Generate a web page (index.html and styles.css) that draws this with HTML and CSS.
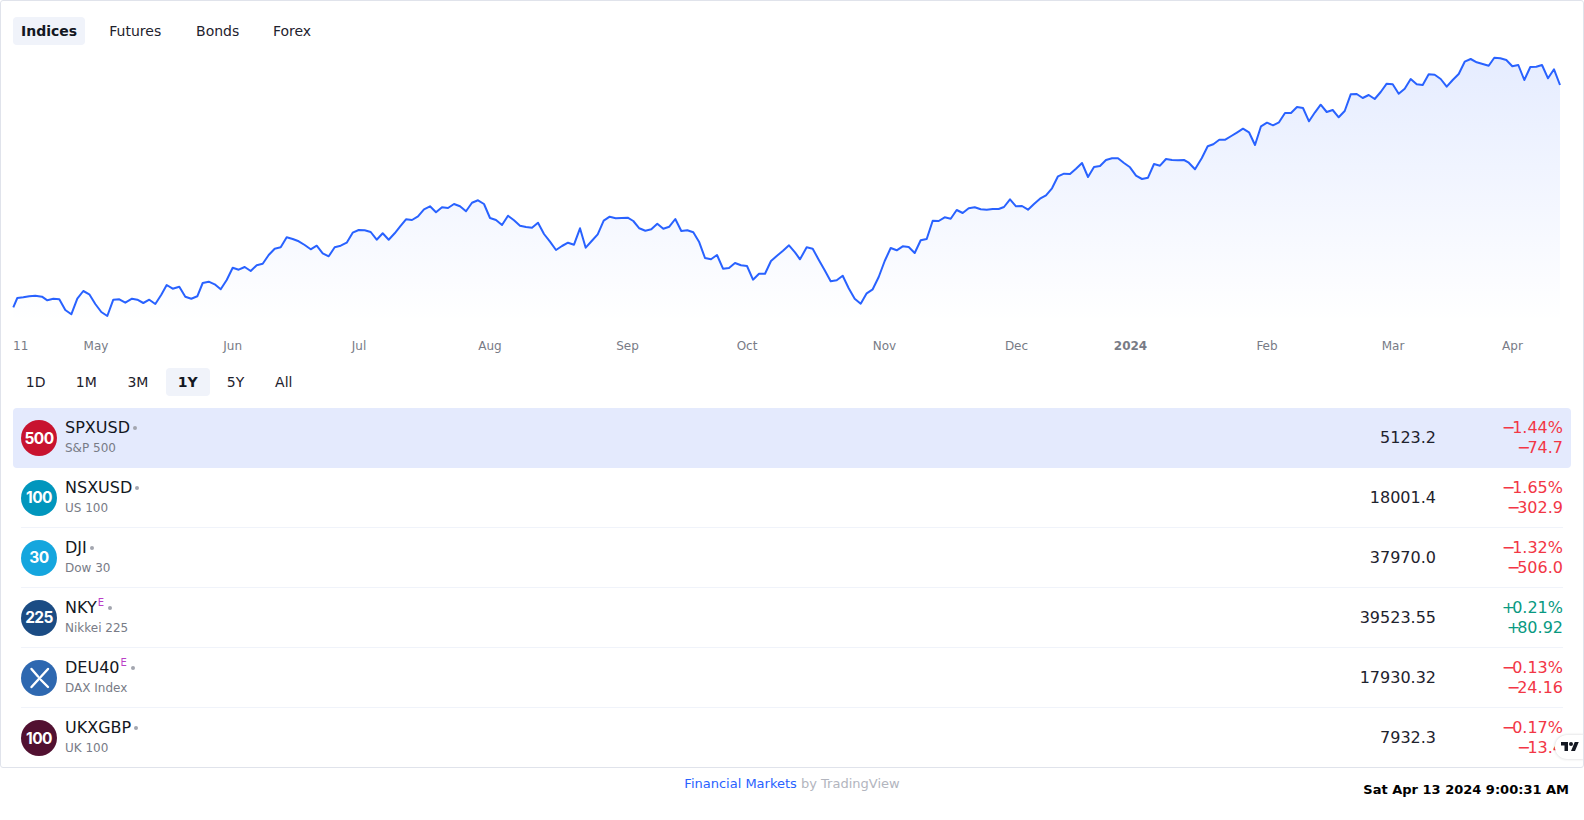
FILE: index.html
```html
<!DOCTYPE html>
<html lang="en">
<head>
<meta charset="utf-8">
<title>Financial Markets</title>
<link rel="stylesheet" href="styles.css">
</head>
<body>
<main class="widget">
  <nav class="tabs">
    <button class="tab active" data-label="Indices">Indices</button>
    <button class="tab" data-label="Futures">Futures</button>
    <button class="tab" data-label="Bonds">Bonds</button>
    <button class="tab" data-label="Forex">Forex</button>
  </nav>
  <svg class="chart" viewBox="1 45 1582 323" width="1582" height="323">
    <defs>
      <linearGradient id="area" gradientUnits="userSpaceOnUse" x1="0" y1="57" x2="0" y2="322">
        <stop offset="0" stop-color="#2962ff" stop-opacity="0.12"/>
        <stop offset="1" stop-color="#2962ff" stop-opacity="0"/>
      </linearGradient>
    </defs>
    <path class="area" d="M13.3 322V307.3L17.3 298 23.3 297.3 29.3 296.3 35.3 295.7 42 296.7 47.3 300.3 53.3 298.7 59.3 299.3 65.3 310 71.3 314.3 77.3 298.7 83.3 291 89.3 294.3 95.3 304 101.3 312 107.3 316 113.3 299.7 119.3 299.3 125.3 302.7 132 298.7 137.3 299.7 143.3 303 149.3 299.7 155.3 304 161.3 294.7 166.7 285 172.7 288.7 179.3 286.7 185.3 296.7 191.3 298.7 197.3 296.3 202.7 283 208.7 281.7 214.7 284.3 220.7 289.3 226.7 280 232.7 267.7 238.7 269.7 244.7 267 250.7 271 256.7 265.3 262.7 263.7 268.7 255 274.7 248.7 280.7 247.3 286.7 237.3 292.7 239 298.7 241.3 304.7 245 310.7 249.3 316.7 245.7 322.7 253.3 328.7 256.3 334.7 247.3 340.7 245.7 346.7 242.7 352.7 232.7 358.7 230 364.7 230.3 370.7 232 376.7 239.7 382.7 233.3 388.7 239.7 394.7 233.3 400 226.7 406 219.3 412 220 418 216.3 424 209.3 430 206.3 436 212.3 442 207.3 448 208 454 204 460 206.3 466 211.3 472 202.7 478 200.3 484 204 490 218 496 220 502 225 508 215.7 514 220.3 520 225.7 526 227 532 227.7 538 222.7 544 234 550 241.7 556 250 562 246 568 242.7 574 244.7 580 228.3 585.7 247.7 591.7 241 597.7 234.3 603.7 220.7 609.7 216.7 615.7 218.3 621.7 218 627.7 217.7 633.3 221 639.3 228.3 645.3 230.7 651.3 229.3 657.3 223.7 663.3 228.7 669.3 226.7 675.3 219 681.3 231 687.3 230.3 693.3 232.3 699 241.7 705 258 711 259.3 717 255 723 268.7 729 268 735 263 741 265.3 747 266 753 279.7 759 273.7 765 273.7 771 261 777 255.7 783 250.7 789 245.3 795 252.3 800 259.3 806.7 247.3 812.7 248.7 818.7 259.7 824.7 270.3 830.7 281.3 836.7 280.3 842.7 275.7 848.7 288.3 854.7 298.7 860.7 303.7 866.7 293.3 872.7 289.3 878.7 277 884.7 261 890.7 248 896.7 250.3 902.7 246.3 908.7 247 914.7 253 920.7 240.3 926.7 239 932.7 220.7 938.7 221 944.7 217.3 950.7 218.7 956.7 210 962.7 213 968.7 208.3 974.7 207.3 980.7 209.3 986.7 209.7 992.7 209 998.7 209 1004 207 1010 199.3 1016 206.3 1022 206 1028 209.7 1034 204 1040 198.7 1046 195.3 1052 188.3 1058 176.3 1064 173.7 1070 174 1076 168.7 1082 163 1088 177 1094 167 1100 166 1106 160 1112 158.3 1118 158.3 1124 163 1130 167.3 1136 175.7 1142 179 1148 177.7 1154 164 1160 165.7 1166 159 1172 160 1178 160.3 1184 160 1188.3 162.3 1195 169.3 1201.7 158.3 1207.7 146.3 1213.3 144.3 1219.3 139.7 1225.3 139.7 1231.3 136 1237.3 132.3 1243 128.7 1249 132.3 1255 145 1261 126.3 1267 122.7 1273 125.3 1279 122.3 1285 113 1291 113 1297 107 1303 108 1309 121.3 1315 112.3 1320.7 104.7 1326.7 112 1332.7 110 1338.7 117.3 1344.7 111 1350.7 94.3 1356.7 94 1362.7 98 1368.7 95 1374.7 99 1380.7 92 1386.7 83.7 1392.7 84.3 1398.7 93.7 1404.7 88.7 1410.7 79 1416.7 84.3 1422.7 85 1428.7 74.3 1434.7 74.7 1440.7 79 1446.7 86.7 1452.7 80 1458.7 74 1464.7 61.7 1470.7 59 1476.7 62.3 1482.7 64 1488.7 65.7 1494.3 57.7 1500.3 58.3 1506.3 60 1512.3 66.3 1518.3 65 1524.3 80 1530.3 67 1536.3 66.7 1542 65 1548 78.3 1554 69.3 1560 85V322Z"/>
    <path class="line" d="M13.3 307.3L17.3 298 23.3 297.3 29.3 296.3 35.3 295.7 42 296.7 47.3 300.3 53.3 298.7 59.3 299.3 65.3 310 71.3 314.3 77.3 298.7 83.3 291 89.3 294.3 95.3 304 101.3 312 107.3 316 113.3 299.7 119.3 299.3 125.3 302.7 132 298.7 137.3 299.7 143.3 303 149.3 299.7 155.3 304 161.3 294.7 166.7 285 172.7 288.7 179.3 286.7 185.3 296.7 191.3 298.7 197.3 296.3 202.7 283 208.7 281.7 214.7 284.3 220.7 289.3 226.7 280 232.7 267.7 238.7 269.7 244.7 267 250.7 271 256.7 265.3 262.7 263.7 268.7 255 274.7 248.7 280.7 247.3 286.7 237.3 292.7 239 298.7 241.3 304.7 245 310.7 249.3 316.7 245.7 322.7 253.3 328.7 256.3 334.7 247.3 340.7 245.7 346.7 242.7 352.7 232.7 358.7 230 364.7 230.3 370.7 232 376.7 239.7 382.7 233.3 388.7 239.7 394.7 233.3 400 226.7 406 219.3 412 220 418 216.3 424 209.3 430 206.3 436 212.3 442 207.3 448 208 454 204 460 206.3 466 211.3 472 202.7 478 200.3 484 204 490 218 496 220 502 225 508 215.7 514 220.3 520 225.7 526 227 532 227.7 538 222.7 544 234 550 241.7 556 250 562 246 568 242.7 574 244.7 580 228.3 585.7 247.7 591.7 241 597.7 234.3 603.7 220.7 609.7 216.7 615.7 218.3 621.7 218 627.7 217.7 633.3 221 639.3 228.3 645.3 230.7 651.3 229.3 657.3 223.7 663.3 228.7 669.3 226.7 675.3 219 681.3 231 687.3 230.3 693.3 232.3 699 241.7 705 258 711 259.3 717 255 723 268.7 729 268 735 263 741 265.3 747 266 753 279.7 759 273.7 765 273.7 771 261 777 255.7 783 250.7 789 245.3 795 252.3 800 259.3 806.7 247.3 812.7 248.7 818.7 259.7 824.7 270.3 830.7 281.3 836.7 280.3 842.7 275.7 848.7 288.3 854.7 298.7 860.7 303.7 866.7 293.3 872.7 289.3 878.7 277 884.7 261 890.7 248 896.7 250.3 902.7 246.3 908.7 247 914.7 253 920.7 240.3 926.7 239 932.7 220.7 938.7 221 944.7 217.3 950.7 218.7 956.7 210 962.7 213 968.7 208.3 974.7 207.3 980.7 209.3 986.7 209.7 992.7 209 998.7 209 1004 207 1010 199.3 1016 206.3 1022 206 1028 209.7 1034 204 1040 198.7 1046 195.3 1052 188.3 1058 176.3 1064 173.7 1070 174 1076 168.7 1082 163 1088 177 1094 167 1100 166 1106 160 1112 158.3 1118 158.3 1124 163 1130 167.3 1136 175.7 1142 179 1148 177.7 1154 164 1160 165.7 1166 159 1172 160 1178 160.3 1184 160 1188.3 162.3 1195 169.3 1201.7 158.3 1207.7 146.3 1213.3 144.3 1219.3 139.7 1225.3 139.7 1231.3 136 1237.3 132.3 1243 128.7 1249 132.3 1255 145 1261 126.3 1267 122.7 1273 125.3 1279 122.3 1285 113 1291 113 1297 107 1303 108 1309 121.3 1315 112.3 1320.7 104.7 1326.7 112 1332.7 110 1338.7 117.3 1344.7 111 1350.7 94.3 1356.7 94 1362.7 98 1368.7 95 1374.7 99 1380.7 92 1386.7 83.7 1392.7 84.3 1398.7 93.7 1404.7 88.7 1410.7 79 1416.7 84.3 1422.7 85 1428.7 74.3 1434.7 74.7 1440.7 79 1446.7 86.7 1452.7 80 1458.7 74 1464.7 61.7 1470.7 59 1476.7 62.3 1482.7 64 1488.7 65.7 1494.3 57.7 1500.3 58.3 1506.3 60 1512.3 66.3 1518.3 65 1524.3 80 1530.3 67 1536.3 66.7 1542 65 1548 78.3 1554 69.3 1560 85"/>
    <g class="axis">
      <text x="13" y="350" class="first">11</text>
      <text x="96" y="350">May</text>
      <text x="232.7" y="350">Jun</text>
      <text x="359" y="350">Jul</text>
      <text x="490" y="350">Aug</text>
      <text x="627.5" y="350">Sep</text>
      <text x="747" y="350">Oct</text>
      <text x="884.5" y="350">Nov</text>
      <text x="1016.5" y="350">Dec</text>
      <text x="1130.5" y="350" class="year">2024</text>
      <text x="1267" y="350">Feb</text>
      <text x="1393" y="350">Mar</text>
      <text x="1512.5" y="350">Apr</text>
    </g>
  </svg>
  <nav class="ranges">
    <button class="tab" data-label="1D">1D</button>
    <button class="tab" data-label="1M">1M</button>
    <button class="tab" data-label="3M">3M</button>
    <button class="tab active" data-label="1Y">1Y</button>
    <button class="tab" data-label="5Y">5Y</button>
    <button class="tab" data-label="All">All</button>
  </nav>
  <section class="list">
    <div class="row active">
      <div class="row-inner">
        <span class="logo logo-spx">500</span>
        <div class="sym"><div class="name">SPXUSD<i class="dot"></i></div><div class="desc">S&amp;P 500</div></div>
        <div class="price">5123.2</div>
        <div class="change down"><div><span class="sign">−</span>1.44%</div><div><span class="sign">−</span>74.7</div></div>
      </div>
    </div>
    <div class="row">
      <div class="row-inner">
        <span class="logo logo-nsx">100</span>
        <div class="sym"><div class="name">NSXUSD<i class="dot"></i></div><div class="desc">US 100</div></div>
        <div class="price">18001.4</div>
        <div class="change down"><div><span class="sign">−</span>1.65%</div><div><span class="sign">−</span>302.9</div></div>
      </div>
    </div>
    <div class="row">
      <div class="row-inner">
        <span class="logo logo-dji">30</span>
        <div class="sym"><div class="name">DJI<i class="dot"></i></div><div class="desc">Dow 30</div></div>
        <div class="price">37970.0</div>
        <div class="change down"><div><span class="sign">−</span>1.32%</div><div><span class="sign">−</span>506.0</div></div>
      </div>
    </div>
    <div class="row">
      <div class="row-inner">
        <span class="logo logo-nky">225</span>
        <div class="sym"><div class="name">NKY<sup class="flag">E</sup><i class="dot"></i></div><div class="desc">Nikkei 225</div></div>
        <div class="price">39523.55</div>
        <div class="change up"><div><span class="sign">+</span>0.21%</div><div><span class="sign">+</span>80.92</div></div>
      </div>
    </div>
    <div class="row">
      <div class="row-inner">
        <span class="logo logo-dax"><svg viewBox="0 0 36 36" width="36" height="36"><path d="M27 9 10.5 27M10.5 9l6.5 7.5M20 20l7 7" fill="none" stroke="#fff" stroke-width="2.4" stroke-linecap="round"/></svg></span>
        <div class="sym"><div class="name">DEU40<sup class="flag">E</sup><i class="dot"></i></div><div class="desc">DAX Index</div></div>
        <div class="price">17930.32</div>
        <div class="change down"><div><span class="sign">−</span>0.13%</div><div><span class="sign">−</span>24.16</div></div>
      </div>
    </div>
    <div class="row">
      <div class="row-inner">
        <span class="logo logo-ukx">100</span>
        <div class="sym"><div class="name">UKXGBP<i class="dot"></i></div><div class="desc">UK 100</div></div>
        <div class="price">7932.3</div>
        <div class="change down"><div><span class="sign">−</span>0.17%</div><div><span class="sign">−</span>13.4</div></div>
      </div>
    </div>
  </section>
  <a class="badge" aria-label="TradingView">
    <svg viewBox="0 0 36 28" width="18" height="14"><path d="M14 22H7V11H0V4h14v18ZM28 22h-8l7.5-18h8L28 22Z" fill="#131722"/><circle cx="20" cy="8" r="4" fill="#131722"/></svg>
  </a>
</main>
<footer class="footer">
  <div class="copy"><span class="link">Financial Markets</span> by TradingView</div>
  <div class="stamp">Sat Apr 13 2024 9:00:31 AM</div>
</footer>
</body>
</html>
```
FILE: styles.css
```css
* { box-sizing: border-box; }
html, body { margin: 0; padding: 0; background: #fff; }
body {
  width: 1584px;
  height: 820px;
  overflow: hidden;
  font-family: "DejaVu Sans", sans-serif;
  color: #1e222d;
}
.widget {
  position: relative;
  display: flex;
  flex-direction: column;
  height: 768px;
  border: 1px solid #e0e3eb;
  border-radius: 3px;
  overflow: hidden;
}
.tabs {
  display: flex;
  gap: 12px;
  padding: 16px 12px 0;
  height: 44px;
}
.ranges {
  display: flex;
  gap: 4px;
  padding: 0 12px;
  height: 28px;
  margin-bottom: 12px;
}
.tab {
  display: inline-grid;
  justify-items: center;
  height: 28px;
  padding: 0 8px;
  border: 0;
  border-radius: 4px;
  background: none;
  font: 14px/28px "DejaVu Sans", sans-serif;
  color: #1e222d;
}
.ranges .tab { padding: 0 12px; }
.tab::after {
  content: attr(data-label);
  font-weight: 700;
  height: 0;
  visibility: hidden;
}
.tab.active { background: #f0f3fa; font-weight: 700; color: #131722; }
.chart { display: block; flex: none; }
.area { fill: url(#area); }
.line { fill: none; stroke: #2962ff; stroke-width: 2; stroke-linejoin: round; }
.axis text { font-size: 12px; fill: #787b86; text-anchor: middle; font-family: "DejaVu Sans", sans-serif; }
.axis .first { text-anchor: start; }
.axis .year { font-weight: 700; }
.list { padding: 0 12px; flex: none; }
.row { padding: 0 8px; border-radius: 4px; }
.row.active { background: #e4eafd; }
.row-inner {
  display: flex;
  align-items: center;
  gap: 8px;
  height: 60px;
  border-bottom: 1px solid #f0f3fa;
}
.row.active .row-inner,
.row:nth-child(6) .row-inner { border-bottom: 0; }
.logo {
  flex: none;
  display: flex;
  align-items: center;
  justify-content: center;
  width: 36px;
  height: 36px;
  padding-top: 1px;
  border-radius: 50%;
  color: #fff;
  font: 700 15.5px/36px Inter, sans-serif;
  letter-spacing: -0.6px;
}
.logo-dax { padding-top: 0; }
.logo-spx { background: #c8132f; }
.logo-nsx { background: #0196bd; }
.logo-dji { background: #15a6de; }
.logo-nky { background: #1b4c84; }
.logo-dax { background: #2e68b0; }
.logo-ukx { background: #521131; }
.sym { flex: 1; }
.name { display: flex; align-items: center; font-size: 16px; line-height: 20px; color: #131722; }
.desc { font-size: 12px; line-height: 20px; color: #787b86; }
.dot { width: 4px; height: 4px; margin-left: 3px; border-radius: 50%; background: #a3a6af; }
.flag {
  align-self: flex-start;
  margin: -2px 0 0 1px;
  font-size: 10px;
  line-height: 14px;
  color: #ba3ec7;
}
.flag + .dot { margin-left: 4px; }
.price { font-size: 16px; line-height: 20px; text-align: right; }
.change { width: 119px; font-size: 16px; line-height: 20px; text-align: right; }
.sign { letter-spacing: -3px; }
.down { color: #f23645; }
.up { color: #089981; }
.badge {
  position: absolute;
  right: -1px;
  bottom: 8px;
  display: flex;
  align-items: center;
  padding-left: 6px;
  width: 29px;
  height: 24px;
  background: #fff;
  border-radius: 12px 0 0 12px;
  box-shadow: 0 0 3px rgba(19, 23, 34, 0.2);
}
.footer {
  position: relative;
  display: grid;
  grid-template-columns: 1fr auto 1fr;
  height: 52px;
}
.copy {
  grid-column: 2;
  padding-top: 8px;
  font-size: 13px;
  line-height: 16px;
  color: #b2b5be;
}
.link { color: #2962ff; }
.stamp {
  justify-self: end;
  padding: 14px 15px 0 0;
  font-size: 13px;
  font-weight: 700;
  line-height: 16px;
  color: #000;
}
```
